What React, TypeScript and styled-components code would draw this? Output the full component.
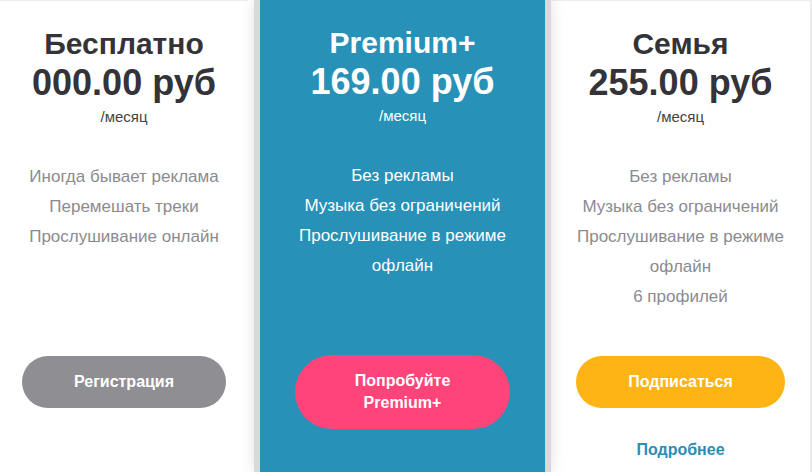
import React from "react";
import styled, { createGlobalStyle } from "styled-components";

const Global = createGlobalStyle`
  html, body {
    margin: 0;
    padding: 0;
    background: #fff;
  }
  body {
    font-family: "Liberation Sans", Arial, sans-serif;
  }
`;

type Tone = "light" | "accent";

const Row = styled.div`
  display: flex;
  align-items: stretch;
  width: 812px;
  height: 472px;
  overflow: hidden;
  background: #fff;
`;

const Card = styled.div<{ $tone: Tone; $w: number }>`
  position: relative;
  flex: 0 0 ${({ $w }) => $w}px;
  display: flex;
  flex-direction: column;
  align-items: center;
  box-sizing: border-box;
  padding-top: 25px;
  text-align: center;
  background: ${({ $tone }) => ($tone === "accent" ? "#2891b7" : "#fff")};
  color: ${({ $tone }) => ($tone === "accent" ? "#fff" : "#333338")};
  border-top: ${({ $tone }) => ($tone === "accent" ? "0" : "1px solid #eeeeee")};
  ${({ $tone }) =>
    $tone === "accent" &&
    `
    z-index: 1;
    margin-left: 6px;
    border-left: 6px solid #d9d9db;
    border-right: 6px solid #d9d9db;
    box-shadow: 0 0 14px rgba(0, 0, 0, 0.12);
  `}
`;

const LastCard = styled(Card)`
  border-right: 2px solid #ececec;
`;

const Title = styled.div`
  font-size: 30px;
  font-weight: 700;
  line-height: 36px;
`;

const Price = styled.div`
  font-size: 36px;
  font-weight: 700;
  line-height: 42px;
`;

const Period = styled.div<{ $tone: Tone }>`
  font-size: 15px;
  line-height: 21px;
  margin-top: 2px;
  color: ${({ $tone }) => ($tone === "accent" ? "#fff" : "#444")};
`;

const Features = styled.ul<{ $tone: Tone }>`
  list-style: none;
  box-sizing: border-box;
  width: 100%;
  margin: 35px 0 0;
  padding: 0 16px;
  height: 194px;
  font-size: 17px;
  line-height: 30px;
  color: ${({ $tone }) => ($tone === "accent" ? "#fff" : "#8b8b8f")};
`;

const Button = styled.button<{ $bg: string; $w: number }>`
  width: ${({ $w }) => $w}px;
  border: 0;
  border-radius: 40px;
  padding: 15px 36px;
  background: ${({ $bg }) => $bg};
  color: #fff;
  font-family: inherit;
  font-size: 16px;
  font-weight: 700;
  line-height: 22px;
  cursor: pointer;
`;

const More = styled.a`
  margin-top: 31px;
  font-size: 16px;
  font-weight: 700;
  color: #2a8db5;
  text-decoration: none;
  line-height: 22px;
`;

export default function App() {
  return (
    <>
      <Global />
      <Row>
        <Card $tone="light" $w={248}>
          <Title>Бесплатно</Title>
          <Price>000.00 руб</Price>
          <Period $tone="light">/месяц</Period>
          <Features $tone="light">
            <li>Иногда бывает реклама</li>
            <li>Перемешать треки</li>
            <li>Прослушивание онлайн</li>
          </Features>
          <Button $bg="#8e8e93" $w={204}>Регистрация</Button>
        </Card>

        <Card $tone="accent" $w={297}>
          <Title>Premium+</Title>
          <Price>169.00 руб</Price>
          <Period $tone="accent">/месяц</Period>
          <Features $tone="accent">
            <li>Без рекламы</li>
            <li>Музыка без ограничений</li>
            <li>Прослушивание в режиме офлайн</li>
          </Features>
          <Button $bg="#fe4479" $w={215}>Попробуйте Premium+</Button>
        </Card>

        <LastCard $tone="light" $w={261}>
          <Title>Семья</Title>
          <Price>255.00 руб</Price>
          <Period $tone="light">/месяц</Period>
          <Features $tone="light">
            <li>Без рекламы</li>
            <li>Музыка без ограничений</li>
            <li>Прослушивание в режиме офлайн</li>
            <li>6 профилей</li>
          </Features>
          <Button $bg="#fdb414" $w={209}>Подписаться</Button>
          <More href="#">Подробнее</More>
        </LastCard>
      </Row>
    </>
  );
}
